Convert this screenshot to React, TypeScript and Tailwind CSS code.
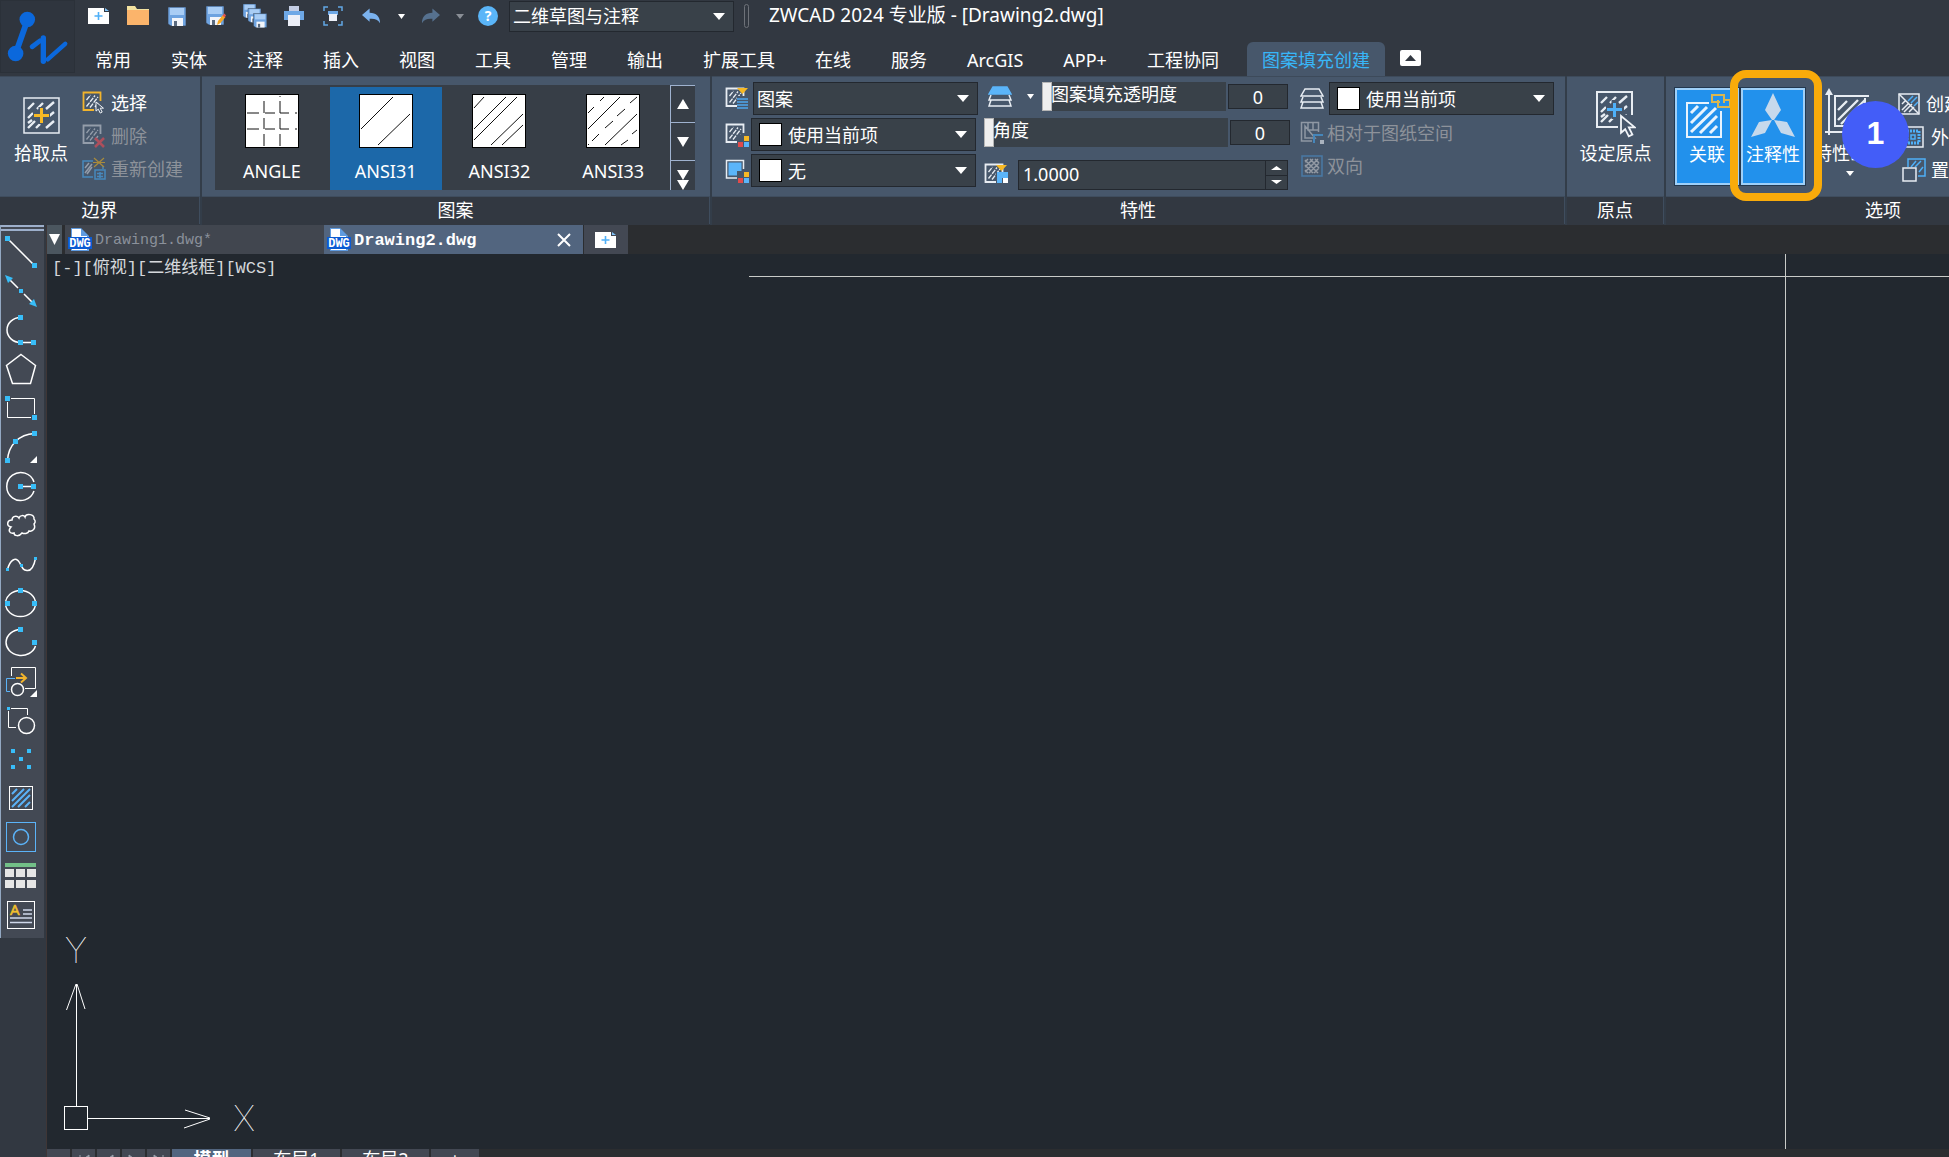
import React from "react"

const BLUE = "#38bdf8"

function Handle({ x, y, s = 5 }: { x: number; y: number; s?: number }) {
  return <rect x={x - s / 2} y={y - s / 2} width={s} height={s} fill={BLUE} stroke="none" shapeRendering="crispEdges" />
}

function Caret({ className = "w-3 h-[7px]" }: { className?: string }) {
  return (
    <svg viewBox="0 0 12 7" preserveAspectRatio="none" className={`${className} shrink-0 pointer-events-none`} fill="currentColor">
      <path d="M0 0h12L6 7z" />
    </svg>
  )
}

function Icon({ children, className = "w-6 h-6", box = 24 }: { children: React.ReactNode; className?: string; box?: number }) {
  return (
    <svg viewBox={`0 0 ${box} ${box}`} className={`${className} shrink-0`} fill="none" stroke="#e8edf3" strokeWidth="1.5">
      {children}
    </svg>
  )
}

/* ---------- quick access icons ---------- */

function NewDoc() {
  return (
    <svg viewBox="0 0 22 18" className="w-[22px] h-[18px]">
      <path d="M0 1h16v4h5v12H0z" fill="#fff" />
      <path d="M17 1l4 3h-4z" fill="#7fc0f5" />
      <path d="M10.500 5v8M6.500 9h8" stroke="#4fb0f8" strokeWidth="1.600" />
    </svg>
  )
}

function Disk({ x = 0, y = 0, s = 1 }: { x?: number; y?: number; s?: number }) {
  return (
    <g transform={`translate(${x} ${y}) scale(${s})`}>
      <path d="M0 0h18v19H3l-3-2z" fill="#6ea3e0" stroke="#323841" strokeWidth="0.600" />
      <path d="M2 1h14v7H2z" fill="#a9cdf5" />
      <path d="M4 11h11v8H4z" fill="#f3f5fa" />
      <path d="M6 14h3v5H6z" fill="#5b6b80" />
    </g>
  )
}

const quickIcons: { label: string; icon: React.ReactNode }[] = [
  { label: "新建", icon: <NewDoc /> },
  {
    label: "打开",
    icon: (
      <svg viewBox="0 0 22 20" className="w-[22px] h-5">
        <path d="M0 0h8l2 3h12v4H0z" fill="#f3e2a0" />
        <path d="M0 4h22v15H0z" fill="#fbb46b" />
      </svg>
    ),
  },
  { label: "保存", icon: <svg viewBox="0 0 18 19" className="w-[18px] h-[19px]"><Disk /></svg> },
  {
    label: "另存为",
    icon: (
      <svg viewBox="0 0 20 20" className="w-5 h-5">
        <Disk />
        <path d="M11 19l1-4 5-6 2.500 2-5 6z" fill="#f7a823" />
        <path d="M16.500 9.500l2-2 1.500 2-1.500 2z" fill="#e8554e" />
      </svg>
    ),
  },
  {
    label: "全部保存",
    icon: (
      <svg viewBox="0 0 24 24" className="w-6 h-6">
        <Disk s={0.72} />
        <Disk x={5} y={4.500} s={0.72} />
        <Disk x={10.500} y={9.500} s={0.74} />
      </svg>
    ),
  },
  {
    label: "打印",
    icon: (
      <svg viewBox="0 0 20 20" className="w-5 h-5">
        <path d="M5 0h10v6H5z" fill="#c3cde4" />
        <path d="M0 5h20v9H0z" fill="#6ea8e6" />
        <path d="M4 9h12v11H4z" fill="#eceff7" />
      </svg>
    ),
  },
  {
    label: "打印预览",
    icon: (
      <svg viewBox="0 0 20 20" className="w-5 h-5">
        <path d="M1 5V1h4M15 1h4v4M19 15v4h-4M5 19H1v-4" fill="none" stroke="#62a6e4" strokeWidth="1.500" />
        <path d="M5 5h10v4H5z" fill="#6ea8e6" />
        <path d="M6 8h8v7H6z" fill="#eceff7" />
      </svg>
    ),
  },
]

function Arrow({ flip, color }: { flip?: boolean; color: string }) {
  return (
    <svg viewBox="0 0 20 16" className="w-[19px] h-4" fill={color}>
      <path d="M0 7L8 0v4.500c7 0 11 4 11 11-2.500-4-6-5-11-4.500V14z" transform={flip ? "matrix(-1 0 0 1 20 0)" : undefined} />
    </svg>
  )
}

/* ---------- header ---------- */

const menuTabs = ["常用", "实体", "注释", "插入", "视图", "工具", "管理", "输出", "扩展工具", "在线", "服务", "ArcGIS", "APP+", "工程协同"]

function Header() {
  return (
    <header className="flex h-19 shrink-0">
      <div className="w-[75px] h-[73px] shrink-0 border border-[#2b3139] bg-[#2f353e]">
        <svg viewBox="0 0 75 73" className="w-full h-full" stroke="#0b68dc" strokeLinecap="round" fill="none">
          <path d="M27 20L15 54" strokeWidth="6" />
          <circle cx="27" cy="19" r="8" fill="#0b68dc" stroke="none" />
          <circle cx="15" cy="54" r="8" fill="#0b68dc" stroke="none" />
          <path d="M32 47l8-6" strokeWidth="5" />
          <path d="M43.500 38v24" strokeWidth="5.500" />
          <path d="M48 60l18-16" strokeWidth="4.500" />
        </svg>
      </div>
      <div className="flex-1 min-w-0 flex flex-col justify-between">
        <div className="flex items-center h-8 pl-1">
          {quickIcons.map((q) => (
            <button key={q.label} aria-label={q.label} className="w-[39px] h-8 flex items-center justify-center shrink-0">
              {q.icon}
            </button>
          ))}
          <button aria-label="放弃" className="w-[39px] h-8 flex items-center justify-center"><Arrow color="#7bb2ee" /></button>
          <button aria-label="放弃列表" className="w-5 h-8 flex items-center justify-center"><Caret className="w-[7px] h-[5px]" /></button>
          <button aria-label="重做" className="w-[39px] h-8 flex items-center justify-center"><Arrow flip color="#56718f" /></button>
          <button aria-label="重做列表" className="w-5 h-8 flex items-center justify-center text-[#8a8f96]"><Caret className="w-2 h-[5px]" /></button>
          <button aria-label="帮助" className="w-9 h-8 flex items-center justify-center">
            <span className="w-5 h-5 rounded-full bg-[#5ab5f8] text-white text-sm leading-5 font-bold">?</span>
          </button>
          <div className="ml-[3px] w-[225px] h-[31px] flex items-center shrink-0 border border-[#23282f] bg-[#394149] pr-2">
            <select aria-label="工作空间" className="flex-1 min-w-0 pl-[3px] appearance-none bg-transparent outline-none">
              <option>二维草图与注释</option>
            </select>
            <Caret />
          </div>
          <span className="ml-[10px] w-[5px] h-6 rounded-full border border-[#6d7178] shrink-0" />
          <h1 className="ml-5 h-[26px] text-[19px] whitespace-nowrap">ZWCAD 2024 专业版 - [Drawing2.dwg]</h1>
        </div>
        <nav className="flex items-end h-[34px] whitespace-nowrap">
          {menuTabs.map((t) => (
            <button key={t} className="px-5 pt-[2px] h-[34px]">{t}</button>
          ))}
          <button className="ml-2 px-[15px] pt-[2px] h-[34px] rounded-t-md bg-[#47576b] text-[#38b6f8]">图案填充创建</button>
          <button aria-label="最小化功能区" className="ml-[15px] mb-[10px] w-[21px] h-4 rounded-[2px] bg-white flex items-center justify-center text-[#323841]">
            <Caret className="w-[11px] h-[6px] rotate-180" />
          </button>
        </nav>
      </div>
    </header>
  )
}

/* ---------- ribbon ---------- */

function Panel({ title, className, children }: { title: string; className: string; children: React.ReactNode }) {
  return (
    <section className={`${className} flex flex-col shrink-0 border-r-2 border-[#333d49]`}>
      <div className="h-30 flex bg-[#47576b] border-t border-[#3d4a5a]">{children}</div>
      <h2 className="h-7 leading-[26px] text-center border-r border-t border-[#3f4d5e]">{title}</h2>
    </section>
  )
}

function SmallButton({ label, icon, disabled }: { label: string; icon: React.ReactNode; disabled?: boolean }) {
  return (
    <button disabled={disabled} className="h-[33px] flex items-center gap-[5px] whitespace-nowrap disabled:text-[#8d929a]">
      {icon}
      {label}
    </button>
  )
}

function Hatch({ color = "#e8edf3", frame = color }: { color?: string; frame?: string }) {
  return (
    <>
      <path d="M12 19H1.500V1.500H18.500V10" stroke={frame} strokeWidth="1.800" />
      <path d="M4.500 9l4-5M4.500 15.500L13 4.500M8 16.500L16 6M13 16l3-4" stroke={color} strokeWidth="1.300" strokeDasharray="5 1" />
    </>
  )
}

function BigHatch({ children }: { children?: React.ReactNode }) {
  return (
    <>
      <rect x="1" y="1" width="35" height="35" />
      <path d="M5 12l6-6M5 21l5-5M14 12l6-6M5 31l7-7M23 12l8-7M13 31l4-4M25 20l6-5M23 31l8-7M5 26l4-3M17 21l4-4" strokeWidth="2.400" />
      {children}
    </>
  )
}

function Cursor({ x, y, s = 1 }: { x: number; y: number; s?: number }) {
  return <path d="M0 0v14l3.500-3 3 6 3-1.500-3-6h5z" transform={`translate(${x} ${y}) scale(${s})`} fill="#47576b" stroke="#f1f4f8" strokeWidth="1.500" />
}

const patterns = [
  { name: "ANGLE", path: "M2 19h12M20 19h10M35 19h9M50 19h2M2 35h12M20 35h10M35 35h9M50 35h2M19 7v12M19 24v11M19 40v12M35 2v1M35 7v12M35 24v11M35 40v12" },
  { name: "ANSI31", path: "M2 35L34 3M19 51L51 20", active: true },
  { name: "ANSI32", path: "M2 14L12 3M2 35L34 3M2 46L45 3M19 51L51 20M30 51L51 31" },
  { name: "ANSI33", path: "M2 19l6-6M14 7l4-4M2 35L34 3M19 51L51 20M2 51l1-1M6 47l7-7M19 34l8-7M31 22l8-7M44 9l7-6M35 51l7-5M46 40l5-4" },
]

function PatternPanel() {
  return (
    <Panel title="图案" className="w-[510px]">
      <div className="mt-2 ml-[13px] w-[480px] h-[105px] flex bg-[#373e47]">
        {patterns.map((p) => (
          <button
            key={p.name}
            className={`flex-1 mx-px mt-[2px] pt-[7px] flex flex-col items-center ${p.active ? "bg-[#1c68a9]" : ""}`}
          >
            <svg viewBox="0 0 54 54" className="w-[54px] h-[54px]">
              <rect x="0.500" y="0.500" width="53" height="53" fill="#fff" stroke="#000" />
              <path d={p.path} stroke="#111" fill="none" />
            </svg>
            <span className="mt-[11px] leading-6">{p.name}</span>
          </button>
        ))}
        <div className="w-[25px] flex flex-col border-l border-[#9fb2cf]">
          <button aria-label="上一行" className="h-[37px] border-t border-[#9fb2cf] flex items-center justify-center"><Caret className="w-3 h-[10px] rotate-180" /></button>
          <button aria-label="下一行" className="h-[38px] border-t border-[#9fb2cf] flex items-center justify-center"><Caret className="w-3 h-[10px]" /></button>
          <button aria-label="展开" className="h-[30px] border-t border-[#9fb2cf] flex flex-col items-center justify-end"><Caret className="w-3 h-[10px]" /><Caret className="w-3 h-[10px]" /></button>
        </div>
      </div>
    </Panel>
  )
}

function Combo({ label, value, swatch }: { label: string; value: string; swatch?: boolean }) {
  return (
    <div className="w-[225px] h-[33px] flex items-center shrink-0 border border-[#23282f] bg-[#394149] pr-2">
      {swatch && <span className="ml-[7px] mr-[3px] w-[23px] h-[23px] border border-black bg-white" />}
      <select aria-label={label} className="flex-1 min-w-0 pl-[3px] appearance-none bg-transparent outline-none">
        <option>{value}</option>
      </select>
      <Caret />
    </div>
  )
}

function SliderRow({ id, label, className }: { id: string; label: string; className: string }) {
  return (
    <>
      <div className={`relative h-[29px] shrink-0 bg-[#394149] ${className}`}>
        <input
          id={id}
          type="range"
          defaultValue={0}
          className="block w-full h-[29px] appearance-none bg-transparent [&::-webkit-slider-thumb]:appearance-none [&::-webkit-slider-thumb]:w-[10px] [&::-webkit-slider-thumb]:h-[29px] [&::-webkit-slider-thumb]:bg-[#efefef] [&::-webkit-slider-thumb]:border [&::-webkit-slider-thumb]:border-[#b5b5b5]"
        />
        <label htmlFor={id} className="absolute left-[9px] top-0 leading-6 pointer-events-none">{label}</label>
      </div>
      <input aria-label={`${label}值`} defaultValue="0" className="ml-[2px] w-[60px] h-[25px] shrink-0 text-center border border-[#23282f] bg-[#394149] outline-none" />
    </>
  )
}

function Layers({ top }: { top?: string }) {
  return (
    <Icon>
      <path d="M5 2h14l4 7H1z" fill={top ?? "none"} stroke={top ?? "#e8edf3"} />
      <path d="M3 10l-2 5h22l-2-5M3 15l-2 6h22l-2-6" />
    </Icon>
  )
}

function PropertiesPanel() {
  return (
    <Panel title="特性" className="w-[855px]">
      <div className="ml-[13px] pt-[5px] flex flex-col gap-[3px]">
        <div className="flex items-center gap-1">
          <Icon>
            <Hatch />
            <path d="M12 1h11l-5.500 6z" fill="#f7b924" stroke="none" />
            <path d="M12 9h12v14H12z" fill="#47576b" stroke="none" />
            <path d="M12 12h11M12 15h11M12 18h11M12 21h11" stroke="#4fa8f0" />
          </Icon>
          <Combo label="图案类型" value="图案" />
        </div>
        <div className="flex items-center gap-[2px]">
          <Icon>
            <Hatch />
            <ColorDots />
          </Icon>
          <Combo label="图案颜色" value="使用当前项" swatch />
        </div>
        <div className="flex items-center gap-[2px]">
          <Icon>
            <path d="M12 19H1.500V1.500H18.500V10" />
            <path d="M3.500 3.500h13v13h-13z" fill="#5bb5fa" stroke="none" />
            <ColorDots />
          </Icon>
          <Combo label="背景色" value="无" swatch />
        </div>
      </div>

      <div className="ml-[6px] w-[306px] pt-[5px] flex flex-col">
        <div className="flex items-center h-[29px]">
          <span className="ml-1 shrink-0"><Layers top="#5bb5fa" /></span>
          <button aria-label="透明度选项" className="w-[30px] h-6 pl-[6px] flex items-center justify-center shrink-0"><Caret className="w-[7px] h-[5px]" /></button>
          <SliderRow id="opacity" label="图案填充透明度" className="w-[184px]" />
        </div>
        <div className="mt-[7px] flex items-center h-[29px]">
          <SliderRow id="angle" label="角度" className="w-[244px]" />
        </div>
        <div className="mt-[13px] flex items-center h-[30px]">
          <Icon className="w-6 h-6">
            <Hatch />
            <path d="M12 9h12v12H12z" fill="#47576b" stroke="none" />
            <path d="M12 2h11l-5.500 6z" fill="#f7b924" stroke="none" />
            <path d="M13 9h11v6h-6v5h-5z" fill="#5bb5fa" stroke="none" />
            <path d="M19 15h5v5h-5z" fill="#fff" stroke="none" />
          </Icon>
          <div className="ml-[10px] w-[270px] h-[30px] flex border border-[#23282f] bg-[#394149]">
            <input aria-label="比例" defaultValue="1.0000" className="flex-1 min-w-0 pl-1 pb-[2px] bg-transparent outline-none" />
            <div className="w-[22px] flex flex-col border-l border-[#23282f]">
              <button aria-label="增大" className="flex-1 flex items-center justify-center"><Caret className="w-[11px] h-1 rotate-180" /></button>
              <button aria-label="减小" className="flex-1 flex items-center justify-center border-t border-[#23282f]"><Caret className="w-[11px] h-1" /></button>
            </div>
          </div>
        </div>
      </div>

      <div className="ml-[10px] pt-[5px] flex flex-col">
        <div className="mb-px flex items-center gap-[5px]">
          <Layers />
          <Combo label="图层" value="使用当前项" swatch />
        </div>
        <div className="flex flex-col">
          <SmallButton
            disabled
            label="相对于图纸空间"
            icon={
              <Icon className="w-6 h-6 -mr-[2px]">
                <path d="M12 20H1.500V1.500H18.500V11M5 5v12h10zM8 2v7h10M13 2v7" stroke="#8f98a4" />
                <path d="M14 22v-8h9" stroke="#4586ba" strokeWidth="2" />
                <path d="M20 19h4v4h-4z" fill="#aab3be" stroke="none" />
              </Icon>
            }
          />
          <SmallButton
            disabled
            label="双向"
            icon={
              <Icon className="w-6 h-6 -mr-[2px]">
                <rect x="2" y="2" width="20" height="20" stroke="#4a7aa5" />
                <path d="M5 8l3-3M5 13l8-8M5 18l13-13M9 19l10-10M14 19l5-5M5 16l3 3M5 11l8 8M5 6l13 13M10 5l9 9M15 5l4 4" stroke="#949ba5" />
              </Icon>
            }
          />
        </div>
      </div>
    </Panel>
  )
}

function ColorDots() {
  return (
    <g stroke="none">
      <path d="M12 12h12v12H12z" fill="#47576b" />
      <path d="M19 13h5v5h-5z" fill="#f7b924" />
      <path d="M13 19h5v5h-5z" fill="#e14b4b" />
      <path d="M19 19h5v5h-5z" fill="#5bb5fa" />
    </g>
  )
}

function ToggleButton({ label, icon }: { label: string; icon: React.ReactNode }) {
  return (
    <button aria-pressed className="w-16 h-[97px] shrink-0 flex flex-col items-center bg-[#2291ec] border-2 border-[#9fd0f8] outline outline-[#23384f] whitespace-nowrap">
      <span className="h-[52px] flex items-start pt-px">{icon}</span>
      <span className="leading-6">{label}</span>
    </button>
  )
}

function Ribbon() {
  return (
    <div className="flex h-[149px] shrink-0">
      <Panel title="边界" className="w-[202px]">
        <button className="w-[82px] pt-5 flex flex-col items-center whitespace-nowrap">
          <Icon box={37} className="w-[37px] h-[37px]">
            <BigHatch>
              <path d="M18.500 10v17M10 18.500h17" stroke="#47576b" strokeWidth="6" />
              <path d="M18.500 11v15M11 18.500h15" stroke="#f7b924" strokeWidth="3" />
            </BigHatch>
          </Icon>
          <span className="mt-[7px] leading-6">拾取点</span>
        </button>
        <div className="pt-[9px] flex flex-col">
          <SmallButton label="选择" icon={<Icon><Hatch frame="#f2b42c" /><Cursor x={14} y={11} s={0.65} /></Icon>} />
          <SmallButton disabled label="删除" icon={<Icon><Hatch color="#949daa" /><path d="M13 14l9 9M22 14l-9 9" stroke="#ad4f5c" strokeWidth="2.500" /></Icon>} />
          <SmallButton
            disabled
            label="重新创建"
            icon={
              <Icon>
                <path d="M11 20H1V4h10M21 9v3" stroke="#4789bd" />
                <path d="M3 11l4-5M3 16l7-9M5 17l5-7" stroke="#949daa" />
                <path d="M12 1l10 9M22 1l-10 9M11 5.500h12" stroke="#a98b3c" strokeWidth="1.200" />
                <path d="M13 13h10v9H13zM15 16.500h6M15 19.500h6M18 15v6" stroke="#4789bd" />
              </Icon>
            }
          />
        </div>
      </Panel>
      <PatternPanel />
      <PropertiesPanel />
      <Panel title="原点" className="w-[99px]">
        <button className="w-full pt-[14px] flex flex-col items-center whitespace-nowrap">
          <svg viewBox="0 0 40 48" className="w-10 h-12" fill="none" stroke="#e8edf3" strokeWidth="2">
            <BigHatch>
              <path d="M18.500 9v19M10 18.500h18" stroke="#47576b" strokeWidth="6" />
              <path d="M22 24h16v16H22z" fill="#47576b" stroke="none" />
              <path d="M18.500 12v14M11 18.500h15" stroke="#4fb0f8" strokeWidth="3" />
              <Cursor x={25} y={25} s={1.200} />
            </BigHatch>
          </svg>
          <span className="mt-[2px] leading-6">设定原点</span>
        </button>
      </Panel>
      <Panel title="选项" className="w-[437px]">
        <div className="ml-[9px] pt-[11px] flex">
          <ToggleButton
            label="关联"
            icon={
              <svg viewBox="0 0 46 48" className="w-[46px] h-12 ml-1" fill="none" stroke="#e8f3fd" strokeWidth="2">
                <path d="M23 12H1v34h34V20" />
                <path d="M5 22l7-7M5 32l16-16M5 41l25-24M14 42l17-17M24 42l7-7" strokeWidth="3" />
                <path d="M34 11H26V4h12v8M44 9h-6M32 9v7h12V9h-4" stroke="#d9b650" />
              </svg>
            }
          />
          <div className="relative z-10 ml-[2px]">
            <ToggleButton
              label="注释性"
              icon={
                <svg viewBox="0 0 46 48" className="w-[46px] h-12" fill="#c6d9ec">
                  <path d="M23 2l8 17-7 10h-2l-7-10zM22 29l-7 13-14 4 8-15zM24 29l7 13 14 4-8-15z" />
                </svg>
              }
            />
            <span className="absolute -left-[11px] -top-[18px] w-[92px] h-[131px] rounded-2xl border-8 border-[#f9ab0a] pointer-events-none" />
          </div>
          <div className="relative ml-[10px] w-[70px] flex justify-center">
            <button className="flex flex-col items-center whitespace-nowrap">
              <svg viewBox="0 0 50 48" className="w-[50px] h-12" fill="none" stroke="#e8edf3" strokeWidth="2">
                <path d="M4 47V3M0 44h40" />
                <path d="M4 0l4 7H0z" fill="#e8edf3" stroke="none" />
                <path d="M44 8H10v30h30V10" />
                <path d="M13 22l9-9M13 32l20-20M16 36l24-24M26 36l10-10" strokeWidth="2.400" />
              </svg>
              <span className="mt-[5px] leading-6">特性匹配</span>
              <Caret className="mt-[6px] w-2 h-[5px]" />
            </button>
            <span className="absolute left-[27px] top-[13px] w-[67px] h-[67px] rounded-full bg-[#435df8] text-white text-[32px] leading-[64px] text-center font-bold font-['Liberation_Sans',sans-serif]">1</span>
          </div>
          <div className="ml-3 -mt-px flex flex-col">
            <SmallButton label="创建独立的图案填充" icon={<Icon><rect x="2" y="2" width="20" height="20" /><path d="M2 2l20 20M5 18l6-6M7 20l8-8M12 20l5-5M5 12l4-4" /><path d="M11 9l5-5M14 11l6-6M17 14l4-4" stroke="#4fb0f8" /></Icon>} />
            <SmallButton label="外部孤岛检测" icon={<Icon className="ml-[5px] w-6 h-6"><rect x="1" y="2" width="20" height="20" /><rect x="5" y="6" width="12" height="12" stroke="#4fb0f8" strokeWidth="3" strokeDasharray="2 1" /><rect x="9" y="10" width="4" height="4" stroke="#4fb0f8" /></Icon>} />
            <SmallButton label="置于边界之后" icon={<Icon className="ml-[5px] w-6 h-6"><path d="M6 9V1h17v17h-7" stroke="#4fb0f8" /><path d="M9 9l5-6M13 9l6-6M17 14l4-5" stroke="#4fb0f8" /><rect x="1" y="10" width="13" height="13" /></Icon>} />
          </div>
        </div>
      </Panel>
    </div>
  )
}

/* ---------- drawing toolbar ---------- */

const tri = <path d="M32 25v7h-7z" fill="#fff" stroke="none" />

const tools: { label: string; art: React.ReactNode }[] = [
  { label: "直线", art: <><path d="M2.500 2.500l27 27" /><Handle x={2.500} y={2.500} /><Handle x={29.500} y={29.500} /></> },
  { label: "构造线", art: <><path d="M4 4l9 9M19 19l9 9" /><path d="M0 0l8 3-5 5zM32 32l-8-3 5-5z" fill={BLUE} stroke="none" /><Handle x={16} y={16} s={4} /></> },
  { label: "多段线", art: <><path d="M15.500 3.500a13.500 12.500 0 0 0 0 25h13" /><Handle x={15.500} y={3.500} /><Handle x={15.500} y={28.500} /><Handle x={28.500} y={28.500} /></> },
  { label: "多边形", art: <path d="M16 1.500l14.500 11L25.500 30.500h-18L1.500 12.500z" /> },
  { label: "矩形", art: <><path d="M6 6.500h23.500V22M2.500 10v15.500H26" strokeWidth="1" /><Handle x={2.500} y={6.500} /><Handle x={29.500} y={25.500} /></> },
  { label: "圆弧", art: <><path d="M29.500 2.500Q18 3 10.500 10.500T2.500 29.500" /><Handle x={29.500} y={2.500} /><Handle x={10.500} y={10.500} /><Handle x={2.500} y={29.500} />{tri}</> },
  { label: "圆", art: <><path d="M29 12a14 14 0 1 0 0 9M15.500 16.500h13" /><Handle x={15.500} y={16.500} /><Handle x={28.500} y={16.500} /></> },
  { label: "修订云线", art: <path d="M6 18c-5-1-4-7 1-7 0-4 5-5 7-2 1-3 5-3 6-1 1-4 10-3 9 2 2 2 1 4 0 5 2 4-1 8-5 7-1 3-5 3-7 2-3 4-8 3-8 0-5 1-6-3-3-6z" /> },
  { label: "样条曲线", art: <><path d="M2.500 21.500C5 12 11 8 14.500 14.500S18 22 22 22.500 29 18 30.500 10.500" /><Handle x={2.500} y={21.500} s={3} /><Handle x={16.500} y={17.500} s={3} /><Handle x={30.500} y={10.500} s={3} /></> },
  { label: "椭圆", art: <><ellipse cx="15.500" cy="16.500" rx="15" ry="13" /><Handle x={15.500} y={3.500} /><Handle x={2.500} y={16.500} /><Handle x={29.500} y={16.500} /></> },
  { label: "椭圆弧", art: <><path d="M15.500 3.500A15 13 0 1 0 30.500 20" /><Handle x={15.500} y={3.500} /><Handle x={29.500} y={16.500} /></> },
  { label: "插入块", art: <><path d="M6.500 11V2.500h24v21H20" strokeWidth="1" /><path d="M10 13.500H1.500v13H5" stroke="#5bb3f8" strokeWidth="1" /><circle cx="12.500" cy="24.500" r="6" /><path d="M11 13h9M16 8.500l5 4.500-5 4.500" stroke="#f2b42c" strokeWidth="2" />{tri}</> },
  { label: "创建块", art: <><path d="M6 4.500h16.500V11M3.500 7v16.500H11" strokeWidth="1" /><Handle x={3.500} y={4.500} s={3} /><circle cx="21.500" cy="21.500" r="8" /></> },
  { label: "点", art: <><Handle x={8} y={8} s={4} /><Handle x={24} y={8} s={4} /><Handle x={16} y={16} s={4} /><Handle x={8} y={24} s={4} /><Handle x={24} y={24} s={4} /></> },
  { label: "图案填充", art: <><rect x="4.500" y="4.500" width="23" height="23" strokeWidth="1" /><path d="M7 12l5-5M7 19L19 7M7 25L25 7M13 25l12-12M20 25l5-5" stroke="#5bb3f8" strokeWidth="2" /></> },
  { label: "面域", art: <g stroke="#5bb3f8"><rect x="1.500" y="1.500" width="29" height="29" strokeWidth="1" /><circle cx="16" cy="16" r="7.500" /></g> },
  { label: "表格", art: <g stroke="none" fill="#e6e6e6"><path d="M0 3h31v4H0z" fill="#73c088" /><path d="M0 9h9v8H0zM11 9h9v8h-9zM22 9h9v8h-9zM0 20h9v8H0zM11 20h9v8h-9zM22 20h9v8h-9z" /></g> },
  { label: "多行文字", art: <><rect x="2.500" y="2.500" width="27" height="27" strokeWidth="1" /><text x="5" y="16" fontSize="15" fill="#f2c02c" stroke="#f2c02c" strokeWidth="0.500">A</text><path d="M18 11h9M18 15h9M5 19h22M5 23.500h22" stroke="#cfd8ea" /></> },
]

function Toolbar() {
  return (
    <aside className="w-[47px] shrink-0 border-r border-[#3f3636]">
      <div className="w-11 pb-1 bg-[#434954] border-l border-[#93a8c2]">
        <div className="h-[7px] flex flex-col gap-[2px]">
          <span className="h-[2px] bg-[#9dafcb]" />
          <span className="h-[2px] bg-[#9dafcb]" />
        </div>
        {tools.map((t) => (
          <button key={t.label} aria-label={t.label} className="w-10 h-[39px] flex items-center justify-center">
            <svg viewBox="0 0 32 32" className="w-8 h-8" fill="none" stroke="#fff" strokeWidth="1.500">{t.art}</svg>
          </button>
        ))}
      </div>
    </aside>
  )
}

/* ---------- drawing area ---------- */

function DwgIcon() {
  return (
    <svg viewBox="0 0 24 24" className="w-6 h-6 shrink-0">
      <path d="M3 0h10l8 8v15H3z" fill="#5f9be0" />
      <path d="M4 1h9v7h6v14H4z" fill="#fff" />
      <path d="M0 9h24v12H0z" fill="#0b5bd3" />
      <text x="12" y="19" fontSize="12" fontWeight="bold" fill="#fff" textAnchor="middle" fontFamily="Liberation Mono">DWG</text>
    </svg>
  )
}

function DocTabs() {
  return (
    <div className="flex h-[29px] shrink-0 bg-[#2b2d30] font-['Liberation_Mono','Noto_Sans_CJK_SC',monospace]">
      <button aria-label="图纸列表" className="w-[15px] mr-[3px] bg-[#4b565f] flex items-center justify-center"><Caret className="w-[11px] h-[11px]" /></button>
      <button className="w-[259px] pl-[3px] flex items-center gap-[3px] bg-[#41464f] text-[#8b919b] text-[15px]">
        <DwgIcon />
        <span className="pt-[2px]">Drawing1.dwg*</span>
      </button>
      <div className="w-[259px] pl-[3px] flex items-center gap-[3px] bg-[#52657f]">
        <DwgIcon />
        <button className="flex-1 pt-[2px] text-left text-[17px] font-bold">Drawing2.dwg</button>
        <button aria-label="关闭" className="w-[39px] h-full flex items-center justify-center">
          <svg viewBox="0 0 14 14" className="w-[14px] h-[14px]" stroke="#fff" strokeWidth="2"><path d="M1 1l12 12M13 1L1 13" /></svg>
        </button>
      </div>
      <button aria-label="新建图纸" className="ml-px w-11 bg-[#434853] flex items-center justify-center"><NewDoc /></button>
    </div>
  )
}

function Canvas() {
  return (
    <main className="relative flex-1 min-h-0 overflow-hidden">
      <p className="pl-[5px] pt-[3px] leading-6 text-[17px] text-[#d5d8dc] font-['Liberation_Mono','Noto_Sans_CJK_SC',monospace]">[-][俯视][二维线框][WCS]</p>
      {/* crosshair */}
      <span className="absolute top-[22px] left-[702px] right-0 h-px bg-[#c9cbc8]" />
      <span className="absolute top-0 bottom-0 left-[1738px] w-px bg-[#c9cbc8]" />
      {/* UCS marker */}
      <svg viewBox="0 0 148 148" className="absolute left-[17px] bottom-[18px] w-[148px] h-[148px]" fill="none" stroke="#fff">
        <rect x="0.500" y="123.500" width="23" height="23" />
        <path d="M12.500 123V1M12 1L2.500 27M13 1l8 25M24 135.500h122M146 135l-25-8M146 136l-26 9" />
      </svg>
      <span className="absolute left-[17px] bottom-[179px] w-6 text-center text-[35px] leading-10 font-thin font-['Inter',sans-serif]">Y</span>
      <span className="absolute left-[185px] bottom-[11px] w-6 text-center text-[35px] leading-10 font-thin font-['Inter',sans-serif]">X</span>
    </main>
  )
}

function LayoutTabs() {
  const nav = ["", "M5 3v12M14 3v12l-8-6z", "M13 3v12l-8-6z", "M4 3v12l8-6z", "M4 3v12l8-6zM13 3v12"]
  return (
    <div className="flex gap-[2px] h-2 shrink-0 overflow-hidden bg-[#2b2d30]">
      {nav.map((d, i) => (
        <button key={i} aria-label={`布局导航 ${i + 1}`} className="w-[23px] h-6 bg-[#434853]">
          <svg viewBox="0 0 18 18" className="w-[18px] h-[18px] mx-auto" fill="#9aa1ac" stroke="#9aa1ac" strokeWidth="1"><path d={d} /></svg>
        </button>
      ))}
      <button className="w-[79px] h-5 leading-5 bg-[#52657f] font-bold">模型</button>
      <button className="w-[87px] h-5 leading-5 bg-[#434853]">布局1</button>
      <button className="w-[87px] h-5 leading-5 bg-[#434853]">布局2</button>
      <button className="w-12 h-5 leading-5 bg-[#434853]">+</button>
    </div>
  )
}

export default function App() {
  return (
    <div className="h-screen flex flex-col overflow-hidden bg-[#323841] text-white text-[18px] leading-6 font-['Noto_Sans','Noto_Sans_CJK_SC',sans-serif]">
      <Header />
      <Ribbon />
      <div className="flex-1 min-h-0 flex">
        <Toolbar />
        <div className="flex-1 min-w-0 flex flex-col bg-[#22282f]">
          <DocTabs />
          <Canvas />
          <LayoutTabs />
        </div>
      </div>
    </div>
  )
}
